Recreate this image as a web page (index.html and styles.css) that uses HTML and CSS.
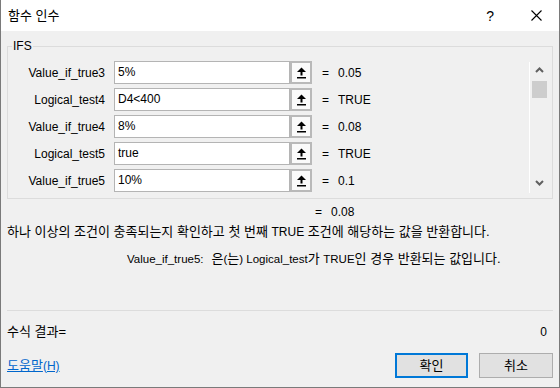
FILE: index.html
```html
<!DOCTYPE html>
<html lang="ko">
<head>
<meta charset="utf-8">
<link rel="stylesheet" href="styles.css">
</head>
<body>
<div class="dialog">
  <div class="titlebar">
    <span class="title">함수 인수</span>
    <span class="help">?</span>
    <svg class="close" width="11" height="11" viewBox="0 0 11 11"><path d="M0.5 0.5L10.5 10.5M10.5 0.5L0.5 10.5" stroke="#000" stroke-width="1.1" fill="none"/></svg>
  </div>
  <div class="main">
    <fieldset class="group">
      <legend>IFS</legend>
      <div class="group-inner">
        <div class="rows">
          <div class="row"><span class="lbl">Value_if_true3</span><span class="inp">5%</span><span class="pick"><svg width="11" height="12" viewBox="0 0 11 12"><path d="M5.5 0.5L1 5H10Z" fill="#000"/><rect x="4.5" y="4.5" width="2" height="4" fill="#000"/><rect x="1" y="10" width="9" height="1.5" fill="#000"/></svg></span><span class="eq">=</span><span class="val">0.05</span></div>
          <div class="row"><span class="lbl">Logical_test4</span><span class="inp">D4&lt;400</span><span class="pick"><svg width="11" height="12" viewBox="0 0 11 12"><path d="M5.5 0.5L1 5H10Z" fill="#000"/><rect x="4.5" y="4.5" width="2" height="4" fill="#000"/><rect x="1" y="10" width="9" height="1.5" fill="#000"/></svg></span><span class="eq">=</span><span class="val">TRUE</span></div>
          <div class="row"><span class="lbl">Value_if_true4</span><span class="inp">8%</span><span class="pick"><svg width="11" height="12" viewBox="0 0 11 12"><path d="M5.5 0.5L1 5H10Z" fill="#000"/><rect x="4.5" y="4.5" width="2" height="4" fill="#000"/><rect x="1" y="10" width="9" height="1.5" fill="#000"/></svg></span><span class="eq">=</span><span class="val">0.08</span></div>
          <div class="row"><span class="lbl">Logical_test5</span><span class="inp">true</span><span class="pick"><svg width="11" height="12" viewBox="0 0 11 12"><path d="M5.5 0.5L1 5H10Z" fill="#000"/><rect x="4.5" y="4.5" width="2" height="4" fill="#000"/><rect x="1" y="10" width="9" height="1.5" fill="#000"/></svg></span><span class="eq">=</span><span class="val">TRUE</span></div>
          <div class="row"><span class="lbl">Value_if_true5</span><span class="inp">10%</span><span class="pick"><svg width="11" height="12" viewBox="0 0 11 12"><path d="M5.5 0.5L1 5H10Z" fill="#000"/><rect x="4.5" y="4.5" width="2" height="4" fill="#000"/><rect x="1" y="10" width="9" height="1.5" fill="#000"/></svg></span><span class="eq">=</span><span class="val">0.1</span></div>
        </div>
        <div class="scrollbar">
          <svg class="chev" width="9" height="6" viewBox="0 0 9 6"><path d="M1 5L4.5 1.5L8 5" stroke="#606060" stroke-width="2" fill="none"/></svg>
          <div class="thumb"></div>
          <div class="track"></div>
          <svg class="chev" width="9" height="6" viewBox="0 0 9 6"><path d="M1 1L4.5 4.5L8 1" stroke="#606060" stroke-width="2" fill="none"/></svg>
        </div>
      </div>
    </fieldset>
    <div class="total"><span class="eq">=</span><span class="val">0.08</span></div>
    <p class="desc">하나 이상의 조건이 충족되는지 확인하고 첫 번째 <span class="lat">TRUE</span> 조건에 해당하는 값을 반환합니다.</p>
    <p class="argdesc"><span class="argname lat">Value_if_true5:</span>은<span class="lat">(</span>는<span class="lat">) Logical_test</span>가 <span class="lat">TRUE</span>인 경우 반환되는 값입니다.</p>
    <div class="sep"></div>
    <div class="result"><span>수식 결과=</span><span class="lat">0</span></div>
    <div class="footer">
      <a class="helplink" href="#">도움말<span class="lat">(H)</span></a>
      <div class="buttons">
        <button class="btn primary">확인</button>
        <button class="btn">취소</button>
      </div>
    </div>
  </div>
</div>
</body>
</html>
```

FILE: styles.css
```css
* { box-sizing: border-box; }
html, body { margin: 0; padding: 0; }
body {
  width: 560px;
  height: 388px;
  font-family: "Liberation Sans", "Noto Sans CJK KR", sans-serif;
  font-size: 12px;
  color: #000;
  background: #f0f0f0;
  overflow: hidden;
}
.lat { font-size: 12px; }
.dialog {
  width: 560px;
  height: 388px;
  border-left: 1px solid #7a7a7a;
  border-right: 1px solid #7a7a7a;
  border-bottom: 1px solid #7a7a7a;
  display: flex;
  flex-direction: column;
}
.titlebar {
  height: 31px;
  flex: none;
  background: #fff;
  display: flex;
  align-items: center;
  padding-left: 7px;
}
.title {
  font-size: 13px;
  line-height: 16px;
  flex: 1;
}
.help {
  font-family: "Liberation Sans", sans-serif;
  font-size: 14px;
  line-height: 16px;
  margin-right: 37px;
}
.close { margin-right: 17px; }
.main {
  padding: 0 6px;
  flex: 1;
  display: flex;
  flex-direction: column;
}
.group {
  margin: 8px 0 0 0;
  padding: 0 0 5px 0;
  border: 1px solid #dcdcdc;
  min-width: 0;
}
.group legend {
  padding: 0 1px;
  margin-left: 4px;
  line-height: 14px;
  font-size: 12px;
}
.group-inner {
  display: flex;
  padding-top: 8px;
}
.rows {
  flex: 1;
  display: flex;
  flex-direction: column;
  gap: 4px;
}
.row {
  height: 23px;
  display: flex;
  align-items: center;
}
.lbl {
  width: 97px;
  text-align: right;
  line-height: 16px;
}
.inp {
  margin-left: 9px;
  width: 176px;
  height: 23px;
  background: #fff;
  border: 1px solid #b4b4b4;
  padding: 0 3px;
  line-height: 21px;
}
.pick {
  width: 22px;
  height: 23px;
  border: 2px solid #b9b9b9;
  background: #fafafa;
  display: flex;
  align-items: center;
  justify-content: center;
}
.pick svg { display: block; }
.eq {
  margin-left: 10px;
  width: 16px;
  line-height: 16px;
}
.val {
  line-height: 16px;
}
.scrollbar {
  width: 19px;
  margin-right: 4px;
  height: 131px;
  margin-top: 1px;
  border-left: 1px solid #fff;
  display: flex;
  flex-direction: column;
  align-items: center;
}
.chev { display: block; margin-top: 5px; flex: none; }
.scrollbar .chev:last-child { margin-top: 0; margin-bottom: 7px; }
.thumb {
  width: 15px;
  height: 17px;
  background: #cdcdcd;
  margin-top: 8px;
  flex: none;
}
.track { flex: 1; }
.total {
  margin-top: 5px;
  height: 16px;
  display: flex;
  padding-left: 308px;
  line-height: 16px;
}
.total .eq { margin-left: 0; }
.desc {
  margin: 4px 0 0 0;
  font-size: 13px;
  line-height: 16px;
}
.argdesc {
  margin: 11px 0 0 0;
  padding-left: 120px;
  font-size: 13px;
  line-height: 16px;
}
.argdesc .lat { font-size: 11.5px; }
.argname { margin-right: 8px; }
.sep {
  margin-top: 43px;
  height: 1px;
  background: #dcdcdc;
}
.result {
  margin-top: 13px;
  display: flex;
  justify-content: space-between;
  font-size: 13px;
  line-height: 16px;
  padding-right: 6px;
}
.footer {
  margin-top: 13px;
  display: flex;
  align-items: center;
  justify-content: space-between;
}
.helplink {
  color: #0066cc;
  text-decoration: underline;
  font-size: 13px;
  line-height: 16px;
}
.buttons {
  display: flex;
  gap: 11px;
}
.btn {
  font-family: "Liberation Sans", "Noto Sans CJK KR", sans-serif;
  font-size: 13px;
  width: 74px;
  height: 25px;
  background: #e1e1e1;
  border: 1px solid #adadad;
  padding: 0;
  color: #000;
  line-height: 16px;
}
.btn.primary {
  width: 73px;
  border: 2px solid #0078d7;
}
```
